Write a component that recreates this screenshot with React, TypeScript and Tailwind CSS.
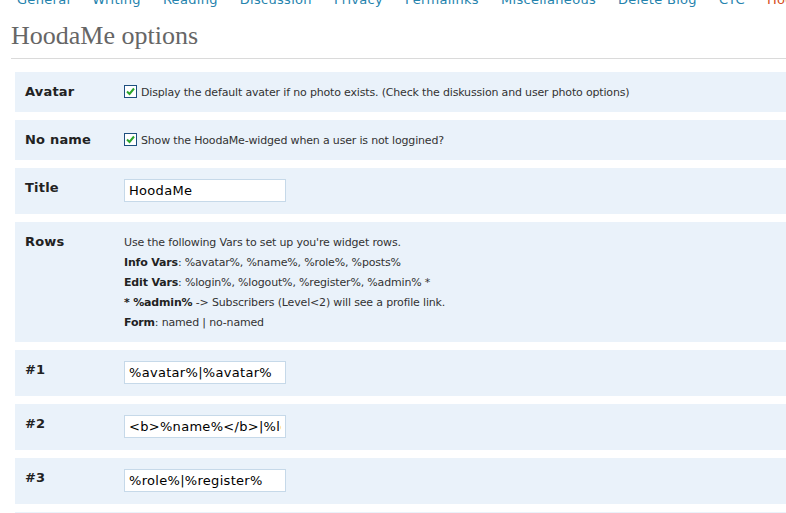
import React from "react";

const tabs = [
  "General",
  "Writing",
  "Reading",
  "Discussion",
  "Privacy",
  "Permalinks",
  "Miscellaneous",
  "Delete Blog",
  "CYC",
];

function Check() {
  return (
    <span className="flex h-[13px] w-[13px] shrink-0 items-center justify-center border border-[#1d4f7f] bg-white">
      <svg width="9" height="9" viewBox="0 0 9 9">
        <path d="M1 4.5 L3.5 7 L8 1.5" fill="none" stroke="#2ba52b" strokeWidth="2" />
      </svg>
    </span>
  );
}

function Row({ label, children, last }: { label: string; children: React.ReactNode; last?: boolean }) {
  return (
    <div className={`flex bg-[#eaf2fa] pl-[10px] pt-[11px] ${last ? "pb-[9px]" : "pb-[12px]"}`}>
      <div className="w-[99px] shrink-0 text-[13px] font-bold leading-[17px] tracking-[0.2px] text-[#222]">{label}</div>
      <div className="min-w-0 flex-1">{children}</div>
    </div>
  );
}

function TextField({ value }: { value: string }) {
  return (
    <input
      readOnly
      value={value}
      className="block h-[23px] w-[162px] border border-[#c6d9e9] bg-white px-[4px] text-[13px] tracking-[0.3px] text-black outline-none"
    />
  );
}

export default function App() {
  return (
    <div className="h-[513px] overflow-hidden bg-white font-['DejaVu_Sans',sans-serif]">
      <div className="-mt-[8px] flex gap-[22px] whitespace-nowrap pl-[17px] text-[13px] leading-[16px] tracking-[0.3px] text-[#2583ad]">
        {tabs.map((t) => (
          <span key={t}>{t}</span>
        ))}
        <span className="text-[#d54e21]">HoodaMe</span>
      </div>

      <h2 className="ml-[11px] mt-[12px] border-b border-[#dadada] pb-[6px] font-['Liberation_Serif',serif] text-[26px] font-normal leading-[32px] text-[#666]">
        HoodaMe options
      </h2>

      <div className="mt-[13px] flex flex-col gap-[8px] pl-[15px]">
        <Row label="Avatar">
          <div className="flex h-[17px] items-center gap-[4px] whitespace-nowrap text-[11px] tracking-[-0.17px] text-[#333]">
            <Check />
            <span className="mt-[4px]">Display the default avater if no photo exists. (Check the diskussion and user photo options)</span>
          </div>
        </Row>
        <Row label="No name">
          <div className="flex h-[17px] items-center gap-[4px] whitespace-nowrap text-[11px] tracking-[-0.17px] text-[#333]">
            <Check />
            <span className="mt-[4px]">Show the HoodaMe-widged when a user is not loggined?</span>
          </div>
        </Row>
        <Row label="Title">
          <TextField value="HoodaMe" />
        </Row>
        <Row label="Rows" last>
          <div className="whitespace-nowrap text-[11px] leading-[20px] tracking-[-0.17px] text-[#333]">
            <div>Use the following Vars to set up you're widget rows.</div>
            <div>
              <b className="text-[#222]">Info Vars</b>: %avatar%, %name%, %role%, %posts%
            </div>
            <div>
              <b className="text-[#222]">Edit Vars</b>: %login%, %logout%, %register%, %admin% *
            </div>
            <div>
              <b className="text-[#222]">* %admin%</b> -&gt; Subscribers (Level&lt;2) will see a profile link.
            </div>
            <div>
              <b className="text-[#222]">Form</b>: named | no-named
            </div>
          </div>
        </Row>
        <Row label="#1">
          <TextField value="%avatar%|%avatar%" />
        </Row>
        <Row label="#2">
          <TextField value="<b>%name%</b>|%logout%" />
        </Row>
        <Row label="#3">
          <TextField value="%role%|%register%" />
        </Row>
        <Row label="#4">
          <TextField value="" />
        </Row>
      </div>
    </div>
  );
}
